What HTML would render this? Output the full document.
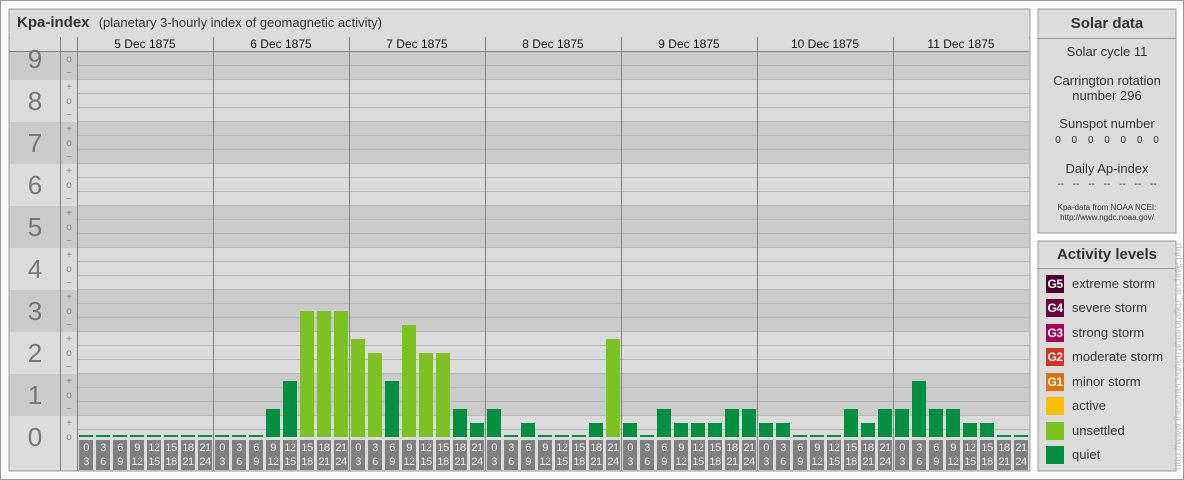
<!DOCTYPE html>
<html><head><meta charset="utf-8"><style>
*{margin:0;padding:0;box-sizing:border-box}
body{width:1184px;height:480px;background:#fff;position:relative;overflow:hidden;font-family:"Liberation Sans",sans-serif;color:#333}
.abs{position:absolute}
.ax{position:absolute;top:440px;width:14px;height:30px;background:#7f7f7f;color:#eee;font-size:11px;line-height:14px;text-align:center;letter-spacing:-0.5px;padding-top:1px}
.d{position:absolute;top:37px;width:136px;text-align:center;font-size:12px;line-height:14px;color:#111}
.c{position:absolute;left:1038px;width:138px;text-align:center;font-size:13px;color:#333}
.sw{position:absolute;left:1046px;width:18px;height:18px;color:#fff;font-size:12px;font-weight:bold;line-height:18px;text-align:center;letter-spacing:-0.5px}
.lt{position:absolute;left:1072px;font-size:13px;line-height:18px;color:#333}
</style></head><body>
<div class="abs" style="left:0;top:0;width:1184px;height:480px;border:1px solid #999"></div>
<svg class="abs" style="left:0;top:0" width="1184" height="480">
<rect x="9" y="9" width="1021" height="462" fill="#dcdcdc" stroke="#999"/>
<line x1="9" y1="37.5" x2="1030" y2="37.5" stroke="#999"/>
<!-- bands -->
<rect x="10" y="51" width="1019" height="29" fill="#cbcbcb"/>
<rect x="10" y="122" width="1019" height="42" fill="#cbcbcb"/>
<rect x="10" y="206" width="1019" height="42" fill="#cbcbcb"/>
<rect x="10" y="290" width="1019" height="42" fill="#cbcbcb"/>
<rect x="10" y="374" width="1019" height="42" fill="#cbcbcb"/>
<rect x="10" y="37" width="1019" height="14" fill="#dcdcdc"/>
<g stroke="#b8b8b8" stroke-width="1">
<path d="M77 429.5H1029M77 415.5H1029M77 401.5H1029M77 387.5H1029M77 373.5H1029M77 359.5H1029M77 345.5H1029M77 331.5H1029M77 317.5H1029M77 303.5H1029M77 289.5H1029M77 275.5H1029M77 261.5H1029M77 247.5H1029M77 233.5H1029M77 219.5H1029M77 205.5H1029M77 191.5H1029M77 177.5H1029M77 163.5H1029M77 149.5H1029M77 135.5H1029M77 121.5H1029M77 107.5H1029M77 93.5H1029M77 79.5H1029M77 65.5H1029"/>
</g>
<g stroke="#808080"><path d="M60.5 37V471M77.5 37V471M213.5 37V471M349.5 37V471M485.5 37V471M621.5 37V471M757.5 37V471M893.5 37V471M60 51.5H1029M9 51.5H60"/></g>
<g font-family="Liberation Sans" font-size="26" fill="#777" text-anchor="middle">
<text x="35" y="68">9</text><text x="35" y="110">8</text><text x="35" y="152">7</text><text x="35" y="194">6</text><text x="35" y="236">5</text><text x="35" y="278">4</text><text x="35" y="320">3</text><text x="35" y="362">2</text><text x="35" y="404">1</text><text x="35" y="446">0</text>
</g>
<g font-family="Liberation Sans" font-size="10" fill="#888" text-anchor="middle">
<text x="69" y="62">o</text><text x="69" y="76">−</text>
<text x="69" y="90">+</text><text x="69" y="104">o</text><text x="69" y="118">−</text>
<text x="69" y="132">+</text><text x="69" y="146">o</text><text x="69" y="160">−</text>
<text x="69" y="174">+</text><text x="69" y="188">o</text><text x="69" y="202">−</text>
<text x="69" y="216">+</text><text x="69" y="230">o</text><text x="69" y="244">−</text>
<text x="69" y="258">+</text><text x="69" y="272">o</text><text x="69" y="286">−</text>
<text x="69" y="300">+</text><text x="69" y="314">o</text><text x="69" y="328">−</text>
<text x="69" y="342">+</text><text x="69" y="356">o</text><text x="69" y="370">−</text>
<text x="69" y="384">+</text><text x="69" y="398">o</text><text x="69" y="412">−</text>
<text x="69" y="426">+</text><text x="69" y="440">o</text>
</g>
<g fill="#009040">
<rect x="79" y="435" width="14" height="2"/><rect x="96" y="435" width="14" height="2"/><rect x="113" y="435" width="14" height="2"/><rect x="130" y="435" width="14" height="2"/><rect x="147" y="435" width="14" height="2"/><rect x="164" y="435" width="14" height="2"/><rect x="181" y="435" width="14" height="2"/><rect x="198" y="435" width="14" height="2"/>
<rect x="215" y="435" width="14" height="2"/><rect x="232" y="435" width="14" height="2"/><rect x="249" y="435" width="14" height="2"/><rect x="266" y="409" width="14" height="28"/><rect x="283" y="381" width="14" height="56"/>
<rect x="385" y="381" width="14" height="56"/><rect x="453" y="409" width="14" height="28"/><rect x="470" y="423" width="14" height="14"/>
<rect x="487" y="409" width="14" height="28"/><rect x="504" y="435" width="14" height="2"/><rect x="521" y="423" width="14" height="14"/><rect x="538" y="435" width="14" height="2"/><rect x="555" y="435" width="14" height="2"/><rect x="572" y="435" width="14" height="2"/><rect x="589" y="423" width="14" height="14"/>
<rect x="623" y="423" width="14" height="14"/><rect x="640" y="435" width="14" height="2"/><rect x="657" y="409" width="14" height="28"/><rect x="674" y="423" width="14" height="14"/><rect x="691" y="423" width="14" height="14"/><rect x="708" y="423" width="14" height="14"/><rect x="725" y="409" width="14" height="28"/><rect x="742" y="409" width="14" height="28"/>
<rect x="759" y="423" width="14" height="14"/><rect x="776" y="423" width="14" height="14"/><rect x="793" y="435" width="14" height="2"/><rect x="810" y="435" width="14" height="2"/><rect x="827" y="435" width="14" height="2"/><rect x="844" y="409" width="14" height="28"/><rect x="861" y="423" width="14" height="14"/><rect x="878" y="409" width="14" height="28"/>
<rect x="895" y="409" width="14" height="28"/><rect x="912" y="381" width="14" height="56"/><rect x="929" y="409" width="14" height="28"/><rect x="946" y="409" width="14" height="28"/><rect x="963" y="423" width="14" height="14"/><rect x="980" y="423" width="14" height="14"/><rect x="997" y="435" width="14" height="2"/><rect x="1014" y="435" width="14" height="2"/>
</g>
<g fill="#7cc220">
<rect x="300" y="311" width="14" height="126"/><rect x="317" y="311" width="14" height="126"/><rect x="334" y="311" width="14" height="126"/>
<rect x="351" y="339" width="14" height="98"/><rect x="368" y="353" width="14" height="84"/><rect x="402" y="325" width="14" height="112"/><rect x="419" y="353" width="14" height="84"/><rect x="436" y="353" width="14" height="84"/>
<rect x="606" y="339" width="14" height="98"/>
</g>
<rect x="1038" y="9" width="138" height="224" fill="#dcdcdc" stroke="#999"/>
<line x1="1038" y1="38.5" x2="1176" y2="38.5" stroke="#999"/>
<rect x="1038" y="241" width="138" height="230" fill="#dcdcdc" stroke="#999"/>
<line x1="1038" y1="268.5" x2="1176" y2="268.5" stroke="#999"/>
<text x="1181" y="470" transform="rotate(-90 1181 470)" font-family="Liberation Sans" font-size="10" fill="#bbb">http://www.fheusner.eu/terra/aurora/kp_archive.php</text>
</svg>
<div class="abs" style="left:17px;top:14px;font-size:15px;font-weight:bold;color:#333">Kpa-index <span style="font-weight:normal;font-size:13px;margin-left:5px">(planetary 3-hourly index of geomagnetic activity)</span></div>
<div class="d" style="left:77px">5 Dec 1875</div><div class="d" style="left:213px">6 Dec 1875</div><div class="d" style="left:349px">7 Dec 1875</div><div class="d" style="left:485px">8 Dec 1875</div><div class="d" style="left:621px">9 Dec 1875</div><div class="d" style="left:757px">10 Dec 1875</div><div class="d" style="left:893px">11 Dec 1875</div>

<div class="ax" style="left:79px">0<br>3</div><div class="ax" style="left:96px">3<br>6</div><div class="ax" style="left:113px">6<br>9</div><div class="ax" style="left:130px">9<br>12</div><div class="ax" style="left:147px">12<br>15</div><div class="ax" style="left:164px">15<br>18</div><div class="ax" style="left:181px">18<br>21</div><div class="ax" style="left:198px">21<br>24</div>
<div class="ax" style="left:215px">0<br>3</div><div class="ax" style="left:232px">3<br>6</div><div class="ax" style="left:249px">6<br>9</div><div class="ax" style="left:266px">9<br>12</div><div class="ax" style="left:283px">12<br>15</div><div class="ax" style="left:300px">15<br>18</div><div class="ax" style="left:317px">18<br>21</div><div class="ax" style="left:334px">21<br>24</div>
<div class="ax" style="left:351px">0<br>3</div><div class="ax" style="left:368px">3<br>6</div><div class="ax" style="left:385px">6<br>9</div><div class="ax" style="left:402px">9<br>12</div><div class="ax" style="left:419px">12<br>15</div><div class="ax" style="left:436px">15<br>18</div><div class="ax" style="left:453px">18<br>21</div><div class="ax" style="left:470px">21<br>24</div>
<div class="ax" style="left:487px">0<br>3</div><div class="ax" style="left:504px">3<br>6</div><div class="ax" style="left:521px">6<br>9</div><div class="ax" style="left:538px">9<br>12</div><div class="ax" style="left:555px">12<br>15</div><div class="ax" style="left:572px">15<br>18</div><div class="ax" style="left:589px">18<br>21</div><div class="ax" style="left:606px">21<br>24</div>
<div class="ax" style="left:623px">0<br>3</div><div class="ax" style="left:640px">3<br>6</div><div class="ax" style="left:657px">6<br>9</div><div class="ax" style="left:674px">9<br>12</div><div class="ax" style="left:691px">12<br>15</div><div class="ax" style="left:708px">15<br>18</div><div class="ax" style="left:725px">18<br>21</div><div class="ax" style="left:742px">21<br>24</div>
<div class="ax" style="left:759px">0<br>3</div><div class="ax" style="left:776px">3<br>6</div><div class="ax" style="left:793px">6<br>9</div><div class="ax" style="left:810px">9<br>12</div><div class="ax" style="left:827px">12<br>15</div><div class="ax" style="left:844px">15<br>18</div><div class="ax" style="left:861px">18<br>21</div><div class="ax" style="left:878px">21<br>24</div>
<div class="ax" style="left:895px">0<br>3</div><div class="ax" style="left:912px">3<br>6</div><div class="ax" style="left:929px">6<br>9</div><div class="ax" style="left:946px">9<br>12</div><div class="ax" style="left:963px">12<br>15</div><div class="ax" style="left:980px">15<br>18</div><div class="ax" style="left:997px">18<br>21</div><div class="ax" style="left:1014px">21<br>24</div>

<div class="c" style="top:15px;font-size:15px;font-weight:bold">Solar data</div>
<div class="c" style="top:44px">Solar cycle 11</div>
<div class="c" style="top:73px;line-height:15px">Carrington rotation<br>number 296</div>
<div class="c" style="top:116px">Sunspot number</div>
<div class="c" style="top:135px;font-size:10px;word-spacing:8px">0 0 0 0 0 0 0</div>
<div class="c" style="top:161px">Daily Ap-index</div>
<div class="c" style="top:179px;font-size:10px;word-spacing:6px">-- -- -- -- -- -- --</div>
<div class="c" style="top:203px;font-size:8px;line-height:10px">Kpa-data from NOAA NCEI:<br>http://www.ngdc.noaa.gov/</div>
<div class="c" style="top:246px;font-size:15px;font-weight:bold">Activity levels</div>
<div class="sw" style="top:275px;background:#4a0028">G5</div><div class="lt" style="top:275px">extreme storm</div>
<div class="sw" style="top:299px;background:#6e0040">G4</div><div class="lt" style="top:299px">severe storm</div>
<div class="sw" style="top:324px;background:#a80058">G3</div><div class="lt" style="top:324px">strong storm</div>
<div class="sw" style="top:348px;background:#d8321e">G2</div><div class="lt" style="top:348px">moderate storm</div>
<div class="sw" style="top:373px;background:#e07010">G1</div><div class="lt" style="top:373px">minor storm</div>
<div class="sw" style="top:397px;background:#f8c000"></div><div class="lt" style="top:397px">active</div>
<div class="sw" style="top:422px;background:#7cc220"></div><div class="lt" style="top:422px">unsettled</div>
<div class="sw" style="top:446px;background:#009040"></div><div class="lt" style="top:446px">quiet</div>
</body></html>
